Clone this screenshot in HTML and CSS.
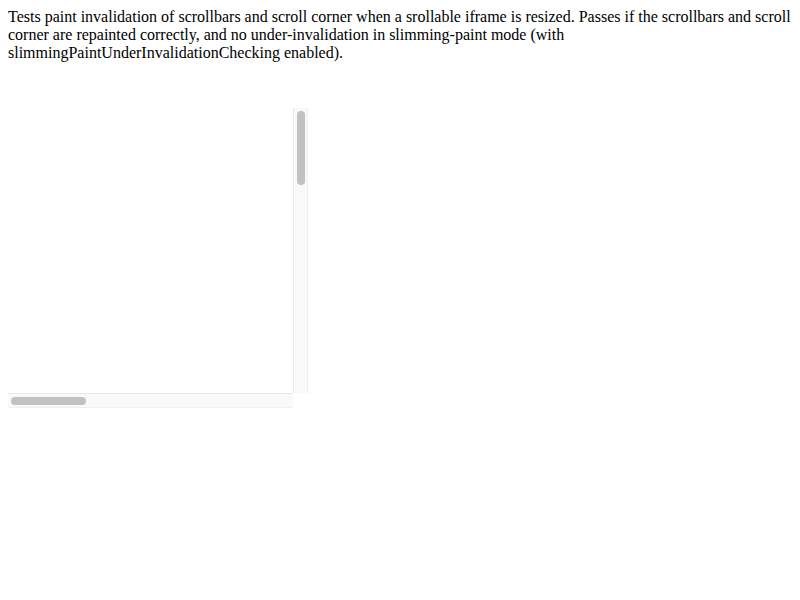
FILE: index.html
```html
<!DOCTYPE html>
<html>
<head>
<meta charset="utf-8">
<link rel="stylesheet" href="styles.css">
</head>
<body>
<div class="desc">Tests paint invalidation of scrollbars and scroll corner when a srollable iframe is resized. Passes if the scrollbars and scroll corner are repainted correctly, and no under-invalidation in slimming-paint mode (with slimmingPaintUnderInvalidationChecking enabled).</div>
<div class="frame">
  <div class="content"></div>
  <div class="vtrack"><div class="vthumb"></div></div>
  <div class="htrack"><div class="hthumb"></div></div>
  <div class="corner"></div>
</div>
</body>
</html>
```

FILE: styles.css
```css
html, body {
  background: #ffffff;
}
body {
  margin: 8px;
  font-family: "Liberation Serif", "Times New Roman", serif;
  font-size: 16px;
  color: #000000;
}
.desc {
  line-height: 18px;
}
.frame {
  margin-top: 46px;
  display: grid;
  grid-template-columns: 285px 15px;
  grid-template-rows: 285px 15px;
  width: 300px;
}
.content {
  background: #ffffff;
}
.vtrack {
  box-sizing: border-box;
  background: #f9f9f9;
  border-left: 1px solid #e8e8e8;
  border-right: 1px solid #f0f0f0;
  padding: 3px 2px 0 3px;
}
.vthumb {
  width: 8px;
  height: 74px;
  border-radius: 4px;
  background: #c1c1c1;
}
.htrack {
  box-sizing: border-box;
  background: #f9f9f9;
  border-top: 1px solid #e8e8e8;
  border-bottom: 1px solid #f0f0f0;
  padding: 3px 0 0 3px;
}
.hthumb {
  width: 75px;
  height: 8px;
  border-radius: 4px;
  background: #c1c1c1;
}
.corner {
  background: #ffffff;
}
```
